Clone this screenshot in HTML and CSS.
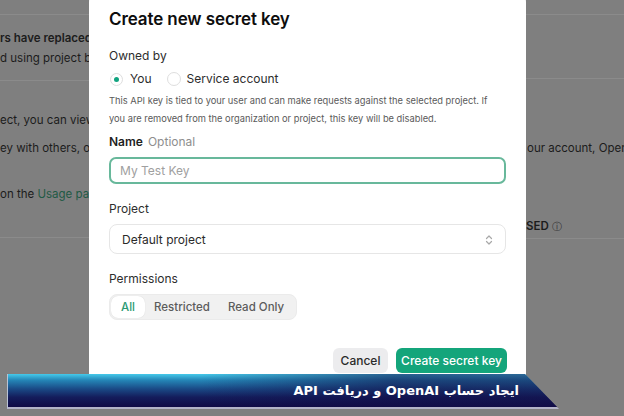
FILE: index.html
```html
<!DOCTYPE html>
<html lang="en">
<head>
<meta charset="utf-8">
<title>Create new secret key</title>
<link rel="stylesheet" href="styles.css">
</head>
<body>
<div class="page">
  <div class="bg-left">
    <div class="rule"></div>
    <p class="bg-line strong m15">rs have replaced u</p>
    <p class="bg-line m4">d using project ba</p>
    <div class="rule m14"></div>
    <p class="bg-line m31">ect, you can view a</p>
    <p class="bg-line m12">ey with others, or e</p>
    <p class="bg-line m30">on the <span class="bg-link">Usage pag</span></p>
    <div class="rule m35"></div>
  </div>
  <div class="bg-right">
    <div class="rule"></div>
    <div class="rule m63"></div>
    <p class="bg-line shift m61">our account, OpenA</p>
    <p class="bg-line strong m62">SED <span class="info">&#9432;</span></p>
    <div class="rule m4"></div>
  </div>
</div>

<div class="modal">
  <h1 class="title">Create new secret key</h1>
  <div class="label m17">Owned by</div>
  <div class="radios">
    <span class="radio on"></span><span class="radio-text">You</span>
    <span class="radio gap"></span><span class="radio-text">Service account</span>
  </div>
  <p class="desc">This API key is tied to your user and can make requests against the selected project. If you are removed from the organization or project, this key will be disabled.</p>
  <div class="label strong m6">Name <span class="optional">Optional</span></div>
  <div class="input"><span class="placeholder">My Test Key</span></div>
  <div class="label m17">Project</div>
  <div class="select">
    <span>Default project</span>
    <svg class="chev" width="8" height="12" viewBox="0 0 8 12" fill="none" stroke="#a8a8a8" stroke-width="1.2" stroke-linecap="round" stroke-linejoin="round"><path d="M1.5 4.5 L4 2 L6.5 4.5"/><path d="M1.5 7.5 L4 10 L6.5 7.5"/></svg>
  </div>
  <div class="label m17">Permissions</div>
  <div class="segmented">
    <span class="seg active">All</span>
    <span class="seg">Restricted</span>
    <span class="seg">Read Only</span>
  </div>
  <div class="actions">
    <button class="btn cancel">Cancel</button>
    <button class="btn primary">Create secret key</button>
  </div>
</div>

<div class="banner">
  <span class="banner-text" dir="rtl">ایجاد حساب OpenAI و دریافت API</span>
</div>
</body>
</html>
```
FILE: styles.css
```css
* { box-sizing: border-box; }
html, body { margin: 0; padding: 0; }
body {
  width: 624px;
  height: 416px;
  overflow: hidden;
  background: #7f7f7f;
  font-family: "Inter", "Noto Sans", sans-serif;
  position: relative;
}

/* background page */
.page {
  display: flex;
  justify-content: space-between;
  padding-top: 14px;
}
.bg-left { width: 89px; overflow: hidden; }
.bg-right { width: 98px; overflow: hidden; }
.rule { height: 1px; background: #8b8b8b; }
.bg-line {
  margin: 0;
  font-size: 11.5px;
  line-height: 16px;
  color: #1c1c1c;
  white-space: nowrap;
}
.bg-line.strong { font-weight: 600; }
.bg-line.shift { margin-left: 1px; }
.bg-link { color: #1f5a45; }
.info { font-weight: 400; font-size: 10px; color: #333; }
.m4 { margin-top: 4px; }
.m6 { margin-top: 6px; }
.m12 { margin-top: 12px; }
.m14 { margin-top: 14px; }
.m15 { margin-top: 15px; }
.m17 { margin-top: 17px; }
.m30 { margin-top: 30px; }
.m31 { margin-top: 31px; }
.m35 { margin-top: 35px; }
.m61 { margin-top: 61px; }
.m62 { margin-top: 62px; }
.m63 { margin-top: 63px; }

/* modal */
.modal {
  position: absolute;
  left: 89px;
  top: -10px;
  width: 437px;
  height: 400px;
  background: #fff;
  border-radius: 12px;
  padding: 17px 20px 0 20px;
  display: flex;
  flex-direction: column;
}
.title {
  margin: 0;
  font-size: 17px;
  line-height: 24px;
  font-weight: 600;
  color: #0d0d0d;
  letter-spacing: -0.1px;
}
.label {
  font-size: 12px;
  line-height: 16px;
  color: #2d2d2d;
}
.label.strong { font-weight: 600; color: #1f1f1f; }
.optional { font-weight: 400; color: #8e8e8e; margin-left: 2px; }
.radios {
  margin-top: 6px;
  height: 18px;
  display: flex;
  align-items: center;
  font-size: 12px;
  line-height: 16px;
  color: #2d2d2d;
}
.radio {
  width: 13px;
  height: 13px;
  border-radius: 50%;
  border: 1px solid #dedede;
  margin-left: 1px;
  margin-right: 7px;
  position: relative;
  flex: none;
}
.radio.on::after {
  content: "";
  position: absolute;
  left: 3px; top: 3px;
  width: 5px; height: 5px;
  border-radius: 50%;
  background: #10a37f;
}
.radio.gap { margin-left: 15px; width: 14px; height: 14px; margin-right: 6px; }
.desc {
  margin: 4px 0 0 0;
  font-size: 9.3px;
  line-height: 18px;
  color: #5a5a5a;
}
.input {
  margin-top: 7px;
  height: 27px;
  border: 2px solid #68b89b;
  border-radius: 7px;
  display: flex;
  align-items: center;
  padding-left: 9px;
}
.placeholder { font-size: 12px; color: #a0a0a0; }
.select {
  margin-top: 7px;
  height: 30px;
  border: 1px solid #e6e6e6;
  border-radius: 8px;
  display: flex;
  align-items: center;
  justify-content: space-between;
  padding: 0 12px 0 12px;
  font-size: 12px;
  color: #2a2a2a;
}
.chev { margin-top: 1px; }
.segmented {
  margin-top: 7px;
  align-self: flex-start;
  height: 26px;
  background: #f1f1f1;
  border: 1px solid #ebebeb;
  border-radius: 8px;
  padding: 1px 3px 1px 1px;
  display: flex;
  align-items: stretch;
  font-size: 11.5px;
  font-weight: 500;
  color: #5c5c5c;
  white-space: nowrap;
}
.seg { display: flex; align-items: center; padding: 0 9px; }
.seg.active {
  width: 34px;
  justify-content: center;
  padding: 0;
  background: #fff;
  border-radius: 7px;
  color: #2b9a73;
  box-shadow: 0 0 1px rgba(0,0,0,0.15);
}
.actions {
  margin-top: 28px;
  display: flex;
  justify-content: flex-end;
  gap: 8px;
}
.btn {
  height: 25px;
  border: none;
  border-radius: 6px;
  font-family: inherit;
  font-size: 12px;
  font-weight: 500;
  padding: 0;
}
.cancel { width: 55px; background: #ececee; color: #2a2a2a; }
.primary { width: 111px; background: #14a57b; color: #fff; margin-right: -1px; }

/* banner */
.banner {
  position: absolute;
  left: 7px;
  top: 374px;
  width: 552px;
  height: 35px;
  clip-path: polygon(0 0, 518px 0, 552px 100%, 0 100%);
  background:
    linear-gradient(to right, rgba(18,14,72,0) 0%, rgba(18,14,72,0) 35%, rgba(18,14,72,0.55) 70%, rgba(18,14,72,0.5) 100%),
    linear-gradient(to bottom, #45c9ea 0%, #2587b8 18%, #1a4a86 45%, #141d5c 70%, #100a45 100%);
  border-left: 1px solid #b9c3d6;
  border-bottom: 2px solid #b3b3c8;
  display: flex;
  align-items: center;
  justify-content: flex-end;
  padding-right: 40px;
}
.banner-text {
  font-family: "DejaVu Sans", sans-serif;
  font-weight: bold;
  font-size: 13px;
  color: #fff;
  white-space: nowrap;
  margin-top: -1px;
}
```
